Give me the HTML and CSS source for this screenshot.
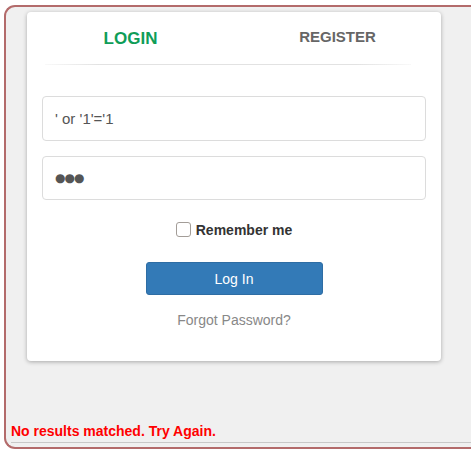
FILE: index.html
```html
<!DOCTYPE html>
<html>
<head>
<meta charset="utf-8">
<link rel="stylesheet" href="styles.css">
</head>
<body>
<div class="frame">
  <div class="card">
    <div class="tabs">
      <div class="tab tab-active">LOGIN</div>
      <div class="tab tab-other">REGISTER</div>
    </div>
    <div class="sep"></div>
    <form class="form">
      <input class="field" type="text" value="' or '1'='1">
      <div class="field field-pw">●●●</div>
      <label class="remember"><input class="check" type="checkbox"><span>Remember me</span></label>
      <button class="btn" type="button">Log In</button>
      <a class="forgot">Forgot Password?</a>
    </form>
  </div>
  <div class="error"><span>No results matched. Try Again.</span></div>
</div>
</body>
</html>
```
FILE: styles.css
```css
html, body {
  margin: 0;
  padding: 0;
  overflow: hidden;
  background: #ffffff;
  font-family: "Liberation Sans", Arial, sans-serif;
}
.frame {
  box-sizing: border-box;
  margin: 5px 0 0 4px;
  width: calc(100% - 4px);
  height: 444px;
  border: 2px solid #b36b6b;
  border-right: none;
  border-radius: 11px 0 0 11px;
  background: #f0f0f0;
  padding: 5px 0 0 5px;
  display: flex;
  flex-direction: column;
}
.card {
  box-sizing: border-box;
  margin-left: 16px;
  width: 414px;
  height: 349px;
  background: #fff;
  border-radius: 4px;
  box-shadow: 0 1px 4px rgba(0,0,0,0.3);
}
.tabs {
  display: flex;
  height: 52px;
}
.tab {
  flex: 1;
  text-align: center;
  font-weight: bold;
  line-height: 20px;
}
.tab-active {
  color: #0f9d58;
  font-size: 17px;
  padding-top: 17px;
}
.tab-other {
  color: #666;
  font-size: 15px;
  padding-top: 15px;
}
.sep {
  height: 1px;
  margin: 0 30px 0 18px;
  background: linear-gradient(to right, rgba(225,225,225,0.2), #e2e2e2 15%, #e2e2e2 85%, rgba(225,225,225,0.2));
}
.form {
  display: flex;
  flex-direction: column;
  align-items: center;
  padding: 31px 15px 0;
  margin: 0;
}
.field {
  box-sizing: border-box;
  width: 100%;
  height: 45px;
  border: 1px solid #dcdcdc;
  border-radius: 4px;
  padding: 0 12px;
  font-family: "Liberation Sans", Arial, sans-serif;
  font-size: 15px;
  color: #555;
  margin: 0 0 15px 0;
  outline: none;
  background: #fff;
}
.field-pw {
  display: flex;
  align-items: center;
  height: 44px;
  margin-bottom: 0;
  font-family: "DejaVu Sans", sans-serif;
  font-size: 12px;
  letter-spacing: -1px;
  color: #555;
}
.remember {
  display: flex;
  align-items: center;
  margin-top: 20px;
  height: 20px;
  font-size: 14px;
  font-weight: bold;
  color: #333;
}
.check {
  appearance: none;
  -webkit-appearance: none;
  box-sizing: border-box;
  width: 15px;
  height: 15px;
  margin: 0 5px 2px 0;
  border: 1px solid #a39d98;
  border-radius: 3px;
  background: #fff;
}
.btn {
  margin-top: 22px;
  width: 177px;
  height: 33px;
  background: #337ab7;
  border: 1px solid #2e6da4;
  border-radius: 3px;
  color: #fff;
  font-family: "Liberation Sans", Arial, sans-serif;
  font-size: 14px;
  padding: 0;
}
.forgot {
  margin-top: 17px;
  font-size: 14px;
  line-height: 16px;
  color: #888;
}
.error {
  margin-top: auto;
  margin-bottom: 4px;
  border-bottom: 1px solid #c8c8c8;
  padding-bottom: 3px;
  font-size: 14px;
  font-weight: bold;
  line-height: 16px;
  color: #ff0000;
}
```
